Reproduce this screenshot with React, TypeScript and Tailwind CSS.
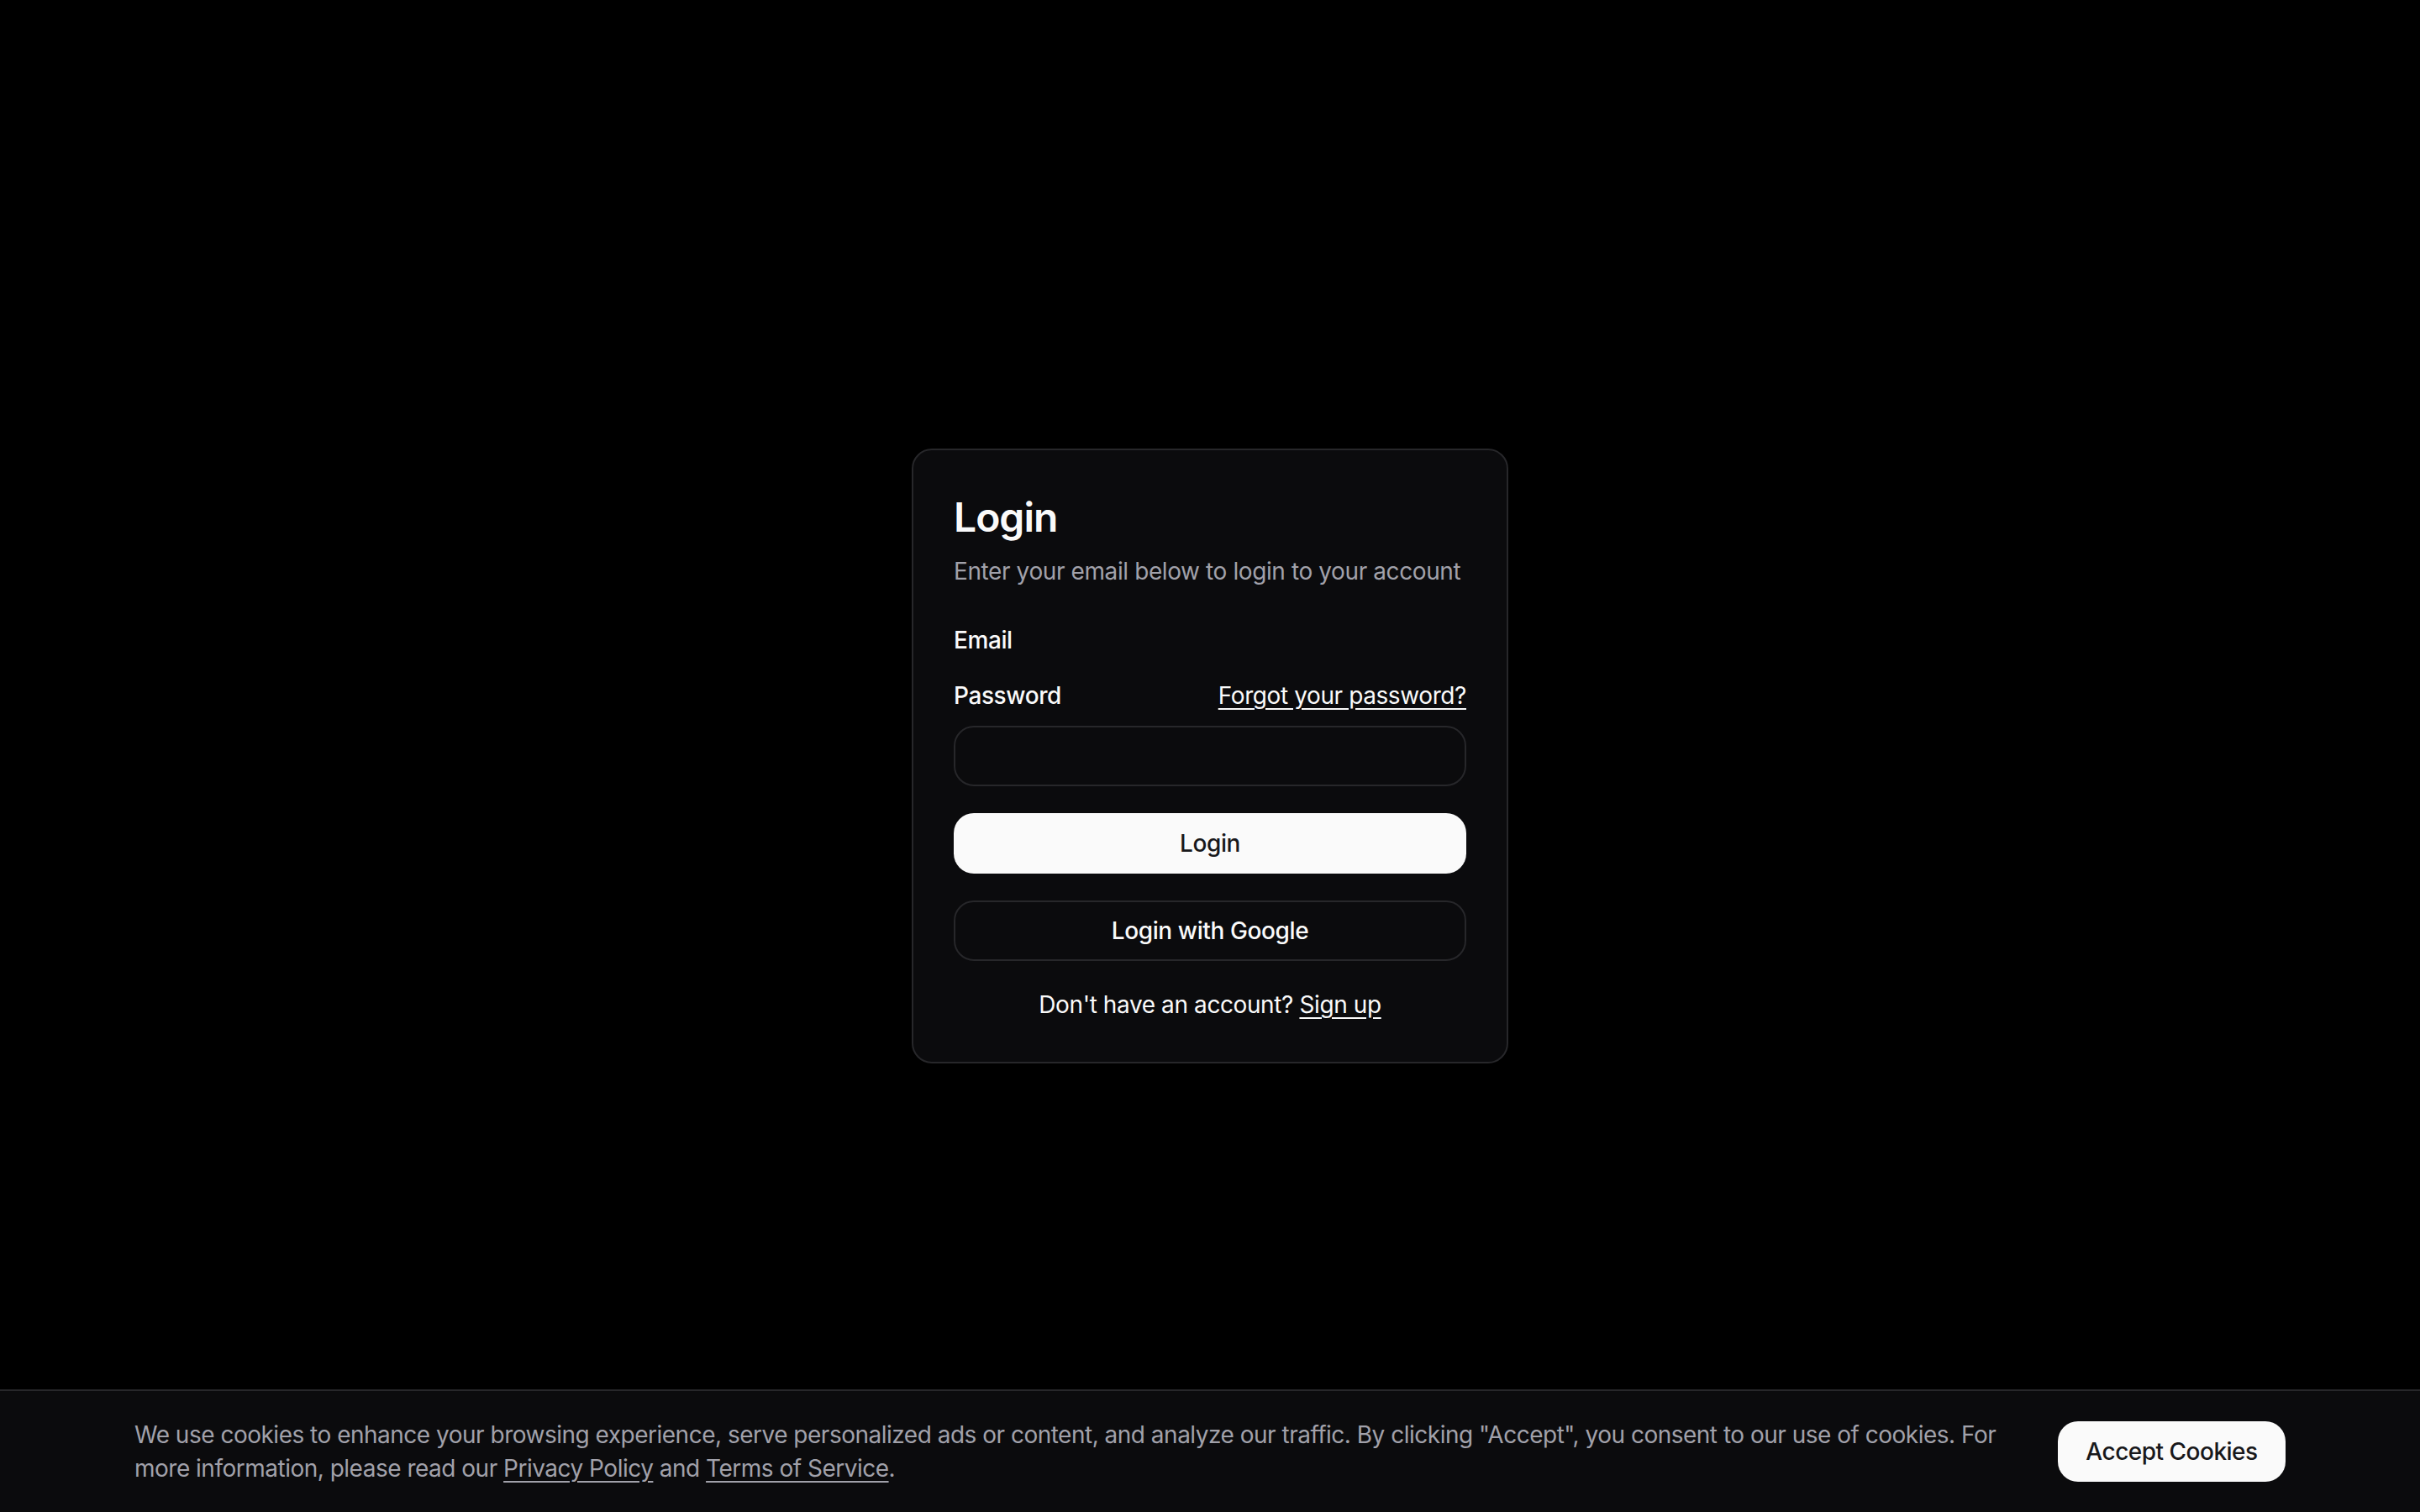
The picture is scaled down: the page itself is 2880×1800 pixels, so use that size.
import React from 'react';

const font = { fontFamily: 'Inter, "Noto Sans", sans-serif' };

const App: React.FC = () => {
  return (
    <div className="relative min-h-screen w-full bg-black text-[#fafafa]" style={font}>
      {/* login card */}
      <main className="flex h-[1800px] items-center justify-center tracking-[-0.4px]">
        <div className="w-[710px] rounded-[24px] border-2 border-[#27272a] bg-[#0b0b0d]">
          <div className="flex flex-col gap-[12px] p-[48px]">
            <h1 className="text-[48px] font-semibold leading-[64px] tracking-[-1px]">Login</h1>
            <p className="text-[28px] leading-[40px] text-[#a1a1aa]">
              Enter your email below to login to your account
            </p>
          </div>

          <div className="flex flex-col px-[48px] pb-[48px]">
            <div className="flex flex-col gap-[32px]">
              <label className="text-[28px] font-medium leading-none">Email</label>

              <div className="flex flex-col gap-[16px]">
                <div className="flex h-[40px] items-center justify-between">
                  <label className="text-[28px] font-medium leading-none">Password</label>
                  <a href="#" className="text-[28px] leading-[40px] underline underline-offset-[5px]">
                    Forgot your password?
                  </a>
                </div>
                <input
                  type="password"
                  className="h-[72px] w-full rounded-[24px] border-2 border-[#27272a] bg-transparent px-[24px] text-[28px] outline-none"
                />
              </div>

              <button className="h-[72px] w-full rounded-[24px] bg-[#fafafa] text-[28px] font-medium text-[#18181b]">
                Login
              </button>

              <button className="h-[72px] w-full rounded-[24px] border-2 border-[#27272a] bg-transparent text-[28px] font-medium text-[#fafafa]">
                Login with Google
              </button>
            </div>

            <div className="mt-[32px] text-center text-[28px] leading-[40px]">
              Don&apos;t have an account?{' '}
              <a href="#" className="underline underline-offset-[5px]">
                Sign up
              </a>
            </div>
          </div>
        </div>
      </main>

      {/* cookie banner */}
      <div className="absolute bottom-0 left-0 right-0 flex items-center gap-[64px] border-t-2 border-[#27272a] bg-[#0b0b0d] px-[160px] py-[32px] tracking-[-0.5px]">
        <p className="flex-1 text-[28px] leading-[40px] text-[#a1a1aa]">
          We use cookies to enhance your browsing experience, serve personalized ads or content, and analyze our
          traffic. By clicking &quot;Accept&quot;, you consent to our use of cookies. For more information, please
          read our{' '}
          <a href="#" className="underline underline-offset-[5px]">
            Privacy Policy
          </a>{' '}
          and{' '}
          <a href="#" className="underline underline-offset-[5px]">
            Terms of Service
          </a>
          .
        </p>
        <button className="h-[72px] w-[271px] shrink-0 rounded-[24px] bg-[#fafafa] text-[28px] font-medium text-[#18181b]">
          Accept Cookies
        </button>
      </div>
    </div>
  );
};

export default App;
